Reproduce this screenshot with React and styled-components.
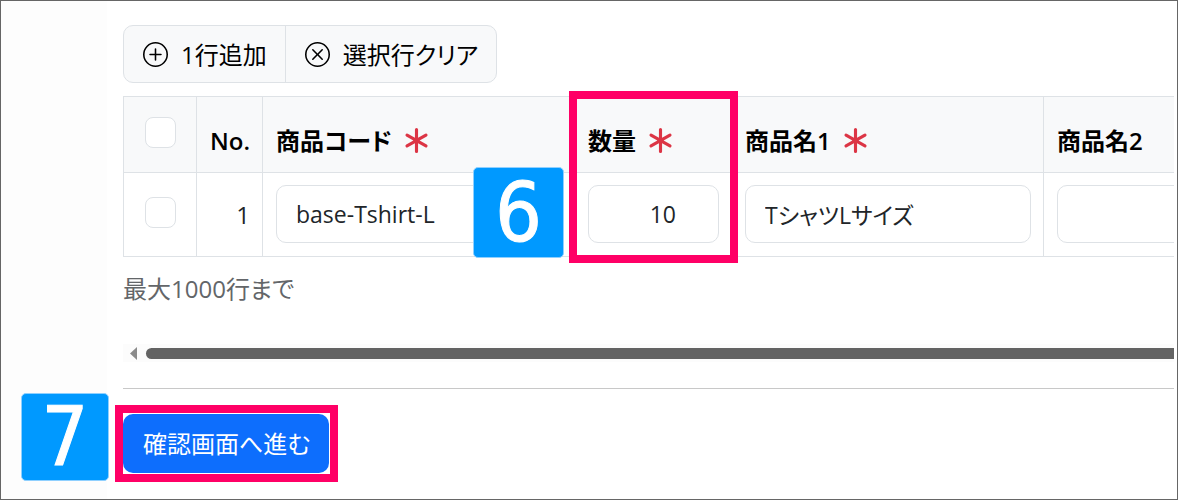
import React, { useState } from 'react';
import styled, { createGlobalStyle, css } from 'styled-components';
import { BsAsterisk, BsPlusCircle, BsXCircle } from 'react-icons/bs';

const GlobalStyle = createGlobalStyle`
  *, *::before, *::after {
    box-sizing: border-box;
  }

  body {
    margin: 0;
    background: #fff;
    color: #212529;
    font-family: 'Open Sans', 'Noto Sans CJK JP', sans-serif;
    font-feature-settings: 'palt';
    font-size: 24px;
    line-height: 37px;
  }

  button, input {
    font: inherit;
    font-feature-settings: inherit;
    color: inherit;
    margin: 0;
  }
`;

const Page = styled.div`
  display: flex;
  min-height: 100vh;
  padding-right: 3px;
  border: 1px solid #666;
`;

const Sidebar = styled.aside`
  flex: 0 0 106px;
  background: #fdfdfd;
`;

const Main = styled.main`
  flex: 1;
  min-width: 0;
  padding: 24px 0 24px 16px;
`;

const ButtonGroup = styled.div`
  display: inline-flex;
  height: 58px;
  margin-bottom: 13px;
  vertical-align: top;
  border: 1px solid #dee2e6;
  border-radius: 10px;
  background: #f8f9fa;
  overflow: hidden;
`;

const ToolButton = styled.button`
  display: flex;
  align-items: center;
  gap: 13px;
  padding: 0 18px 0 19px;
  border: none;
  background: transparent;
  color: #000;
  white-space: nowrap;
  cursor: pointer;

  & + & {
    border-left: 1px solid #dee2e6;
  }

  &:hover {
    background: #e9ecef;
  }
`;

const TableArea = styled.div`
  position: relative;
`;

const TableScroll = styled.div`
  overflow: hidden;
`;

const Table = styled.table`
  table-layout: fixed;
  width: 1233px;
  border-spacing: 0;
  border: solid #dee2e6;
  border-width: 1px 0 0 1px;
`;

const Col = styled.col`
  width: ${({ $width }) => $width}px;
`;

const cell = css`
  padding: 12px 12px 13px 13px;
  border: solid #dee2e6;
  border-width: 0 1px 1px 0;
  text-align: ${({ $align }) => $align || 'left'};
`;

const HeadCell = styled.th`
  ${cell}
  height: 76px;
  background: #f8f9fa;
  color: #000;
  font-weight: 600;
  vertical-align: ${({ $middle }) => ($middle ? 'middle' : 'bottom')};
  white-space: nowrap;
`;

const Cell = styled.td`
  ${cell}
  vertical-align: middle;
`;

const HeadLabel = styled.span`
  display: flex;
  align-items: center;
  gap: 12px;
`;

const Checkbox = styled.input`
  display: block;
  appearance: none;
  width: 31px;
  height: 31px;
  margin: 0 auto 4px;
  border: 1px solid #dee2e6;
  border-radius: 8px;
  background: #fff;

  &:checked {
    background: #0d6efd;
    border-color: #0d6efd;
  }
`;

const TextInput = styled.input`
  display: block;
  width: 100%;
  height: 58px;
  padding: 0 ${({ $numeric }) => ($numeric ? 42 : 19)}px 0 19px;
  border: 1px solid #dee2e6;
  border-radius: 10px;
  background: #fff;
  font-size: 23px;
  text-align: ${({ $numeric }) => ($numeric ? 'right' : 'left')};

  &:focus {
    outline: none;
    border-color: #86b7fe;
  }
`;

const Note = styled.p`
  margin: 13px 0 37px;
  color: #636669;
`;

const ScrollBar = styled.div`
  display: flex;
  align-items: center;
  gap: 9px;
  height: 18px;
  padding-left: 7px;
  background: #fcfcfc;
`;

const ScrollArrow = styled.svg`
  flex: none;
  width: 7px;
  height: 13px;
  fill: #8b8b8b;
`;

const ScrollThumb = styled.div`
  flex: 1;
  height: 11px;
  border-radius: 6px 0 0 6px;
  background: #636363;
`;

const Divider = styled.hr`
  height: 1px;
  margin: 26px 0 25px;
  border: none;
  background: #c8c8c8;
`;

const SubmitArea = styled.div`
  position: relative;
  display: inline-block;
  vertical-align: top;
`;

const SubmitButton = styled.button`
  display: block;
  height: 59px;
  padding: 0 19px 0 20px;
  border: none;
  border-radius: 10px;
  background: #0d6efd;
  color: #fff;
  white-space: nowrap;
  cursor: pointer;
`;

const Highlight = styled.div`
  position: absolute;
  left: ${({ $left }) => $left}px;
  top: ${({ $top }) => $top}px;
  width: ${({ $width }) => $width}px;
  height: ${({ $height }) => $height}px;
  border: 8px solid #ff0066;
  pointer-events: none;
`;

const StepBadge = styled.div`
  position: absolute;
  left: ${({ $left }) => $left}px;
  top: ${({ $top }) => $top}px;
  display: flex;
  align-items: center;
  justify-content: center;
  width: ${({ $size }) => $size}px;
  height: ${({ $size }) => $size}px;
  border: 1px solid #8fd0ff;
  border-radius: 5px;
  background: #0099ff;
  color: #fff;
  font-family: 'DejaVu Sans Condensed', 'DejaVu Sans', sans-serif;
  font-size: 82px;
  line-height: 84px;
  -webkit-text-stroke: 1px #fff;
`;

const Required = () => <BsAsterisk size={25} color="#dc3545" />;

const App = () => {
  const [row, setRow] = useState({
    code: 'base-Tshirt-L',
    quantity: '10',
    name1: 'TシャツLサイズ',
    name2: '',
  });

  const handleChange = (e) => {
    setRow({ ...row, [e.target.name]: e.target.value });
  };

  return (
    <Page>
      <GlobalStyle />
      <Sidebar />
      <Main>
        <ButtonGroup>
          <ToolButton type="button"><BsPlusCircle size={25} />1行追加</ToolButton>
          <ToolButton type="button"><BsXCircle size={25} />選択行クリア</ToolButton>
        </ButtonGroup>

        <TableArea>
          <TableScroll>
            <Table>
              <colgroup>
                <Col $width={73} />
                <Col $width={66} />
                <Col $width={312} />
                <Col $width={157} />
                <Col $width={312} />
                <Col $width={312} />
              </colgroup>
              <thead>
                <tr>
                  <HeadCell $middle><Checkbox type="checkbox" aria-label="全選択" /></HeadCell>
                  <HeadCell $align="right">No.</HeadCell>
                  <HeadCell><HeadLabel>商品コード<Required /></HeadLabel></HeadCell>
                  <HeadCell><HeadLabel>数量<Required /></HeadLabel></HeadCell>
                  <HeadCell><HeadLabel>商品名1<Required /></HeadLabel></HeadCell>
                  <HeadCell>商品名2</HeadCell>
                </tr>
              </thead>
              <tbody>
                <tr>
                  <Cell><Checkbox type="checkbox" aria-label="1行目を選択" /></Cell>
                  <Cell $align="right">1</Cell>
                  <Cell>
                    <TextInput name="code" aria-label="商品コード" value={row.code} onChange={handleChange} />
                  </Cell>
                  <Cell>
                    <TextInput
                      name="quantity"
                      aria-label="数量"
                      inputMode="numeric"
                      value={row.quantity}
                      onChange={handleChange}
                      $numeric
                    />
                  </Cell>
                  <Cell>
                    <TextInput name="name1" aria-label="商品名1" value={row.name1} onChange={handleChange} />
                  </Cell>
                  <Cell>
                    <TextInput name="name2" aria-label="商品名2" value={row.name2} onChange={handleChange} />
                  </Cell>
                </tr>
              </tbody>
            </Table>
          </TableScroll>
          <StepBadge $left={350} $top={71} $size={91}>6</StepBadge>
          <Highlight $left={446} $top={-5} $width={169} $height={172} />
        </TableArea>

        <Note>最大1000行まで</Note>

        <ScrollBar>
          <ScrollArrow viewBox="0 0 7 13"><path d="M7 0v13L0 6.5z" /></ScrollArrow>
          <ScrollThumb />
        </ScrollBar>

        <Divider />

        <SubmitArea>
          <SubmitButton type="button">確認画面へ進む</SubmitButton>
          <Highlight $left={-8} $top={-9} $width={223} $height={77} />
          <StepBadge $left={-102} $top={-21} $size={88}>7</StepBadge>
        </SubmitArea>
      </Main>
    </Page>
  );
};

export default App;
